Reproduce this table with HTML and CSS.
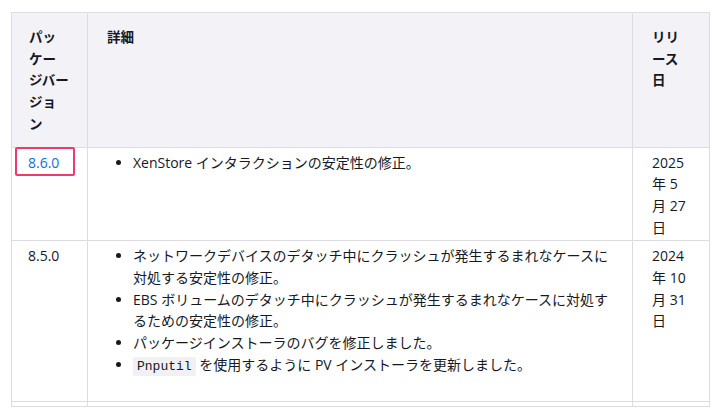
FILE: index.html
```html
<!DOCTYPE html>
<html lang="ja">
<head>
<meta charset="utf-8">
<link rel="stylesheet" href="styles.css">
</head>
<body>
<div class="wrap">
<table class="tbl">
  <colgroup>
    <col class="c1"><col class="c2"><col class="c3">
  </colgroup>
  <thead>
    <tr>
      <th>パッ<br>ケー<br>ジバー<br>ジョ<br>ン</th>
      <th>詳細</th>
      <th>リリ<br>ース<br>日</th>
    </tr>
  </thead>
  <tbody>
    <tr>
      <td><a class="ver hl" href="#">8.6.0</a></td>
      <td>
        <ul class="list">
          <li>XenStore インタラクションの安定性の修正。</li>
        </ul>
      </td>
      <td>2025 年 5 月 27 日</td>
    </tr>
    <tr>
      <td>8.5.0</td>
      <td>
        <ul class="list last">
          <li>ネットワークデバイスのデタッチ中にクラッシュが発生するまれなケースに対処する安定性の修正。</li>
          <li>EBS ボリュームのデタッチ中にクラッシュが発生するまれなケースに対処するための安定性の修正。</li>
          <li>パッケージインストーラのバグを修正しました。</li>
          <li><code class="code">Pnputil</code> を使用するように PV インストーラを更新しました。</li>
        </ul>
      </td>
      <td>2024 年 10 月 31 日</td>
    </tr>
    <tr class="stub">
      <td></td><td></td><td></td>
    </tr>
  </tbody>
</table>
</div>
</body>
</html>
```

FILE: styles.css
```css
html, body {
  margin: 0;
  padding: 0;
  background: #ffffff;
}
body {
  padding: 12px 10px 0 11px;
  font-family: "Open Sans", "Noto Sans CJK JP", sans-serif;
  font-size: 14px;
  color: #16191f;
}
.tbl {
  border-collapse: collapse;
  table-layout: fixed;
  width: 699px;
  border: 1px solid #d9d9df;
}
.c1 { width: 76px; }
.c2 { width: 545px; }
.c3 { width: 77px; }
.tbl th, .tbl td {
  border: 1px solid #dcdce2;
  vertical-align: top;
  text-align: left;
  line-height: 21.7px;
}
.tbl th {
  background: #f2f2f7;
  font-weight: 700;
  font-family: "Noto Sans CJK JP", sans-serif;
  font-size: 13.5px;
  padding: 13px 10px 12px 17px;
  white-space: nowrap;
}
.tbl td {
  padding: 4px 10px 2px 16px;
}
.tbl td:nth-child(2) { padding-right: 19px; }
.tbl td:nth-child(3) { padding-right: 18px; padding-left: 19px; }
.tbl th:nth-child(2), .tbl td:nth-child(2) { padding-left: 19px; }
.tbl th:nth-child(3) { padding-left: 19px; }
.ver {
  color: #0f6fdc;
  text-decoration: none;
}
.hl {
  position: relative;
}
.hl::after {
  content: "";
  position: absolute;
  left: -13px;
  right: -16px;
  top: -6px;
  bottom: -4px;
  border: 2px solid #ec3a6c;
  border-radius: 2px;
}
.list {
  margin: 0;
  padding-left: 26px;
}
.list.last {
  margin-bottom: 21px;
}
.code {
  font-family: "Liberation Mono", "DejaVu Sans Mono", monospace;
  font-size: 13px;
  background: #f1f1f4;
  border-radius: 2px;
  padding: 2px 4px;
}
.stub td {
  height: 4px;
  padding: 0;
  line-height: 0;
}
```
